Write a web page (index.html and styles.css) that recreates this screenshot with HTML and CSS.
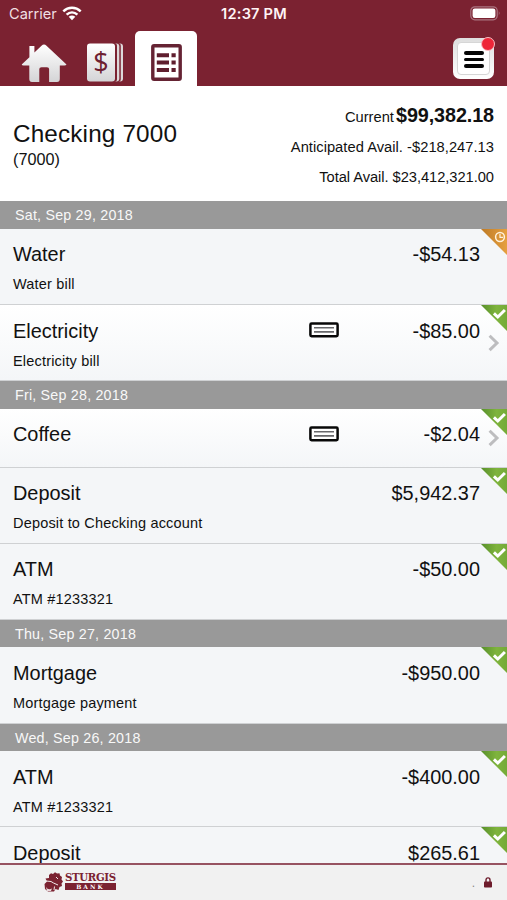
FILE: index.html
```html
<!DOCTYPE html>
<html lang="en">
<head>
<meta charset="utf-8">
<title>Checking 7000</title>
<link rel="stylesheet" href="styles.css">
</head>
<body>
<svg width="0" height="0" class="defs" aria-hidden="true">
  <defs>
    <linearGradient id="silver" x1="0" y1="0" x2="0" y2="1"><stop offset="0" stop-color="#fff"/><stop offset="1" stop-color="#d4d4d6"/></linearGradient>
    <linearGradient id="green" x1="0" y1="0" x2="1" y2="0"><stop offset="0" stop-color="#578f2b"/><stop offset=".6" stop-color="#7fb43d"/><stop offset="1" stop-color="#74aa38"/></linearGradient>
    <linearGradient id="orange" x1="0" y1="0" x2="1" y2="0"><stop offset="0" stop-color="#bd7a25"/><stop offset="1" stop-color="#e6a040"/></linearGradient>
    <symbol id="done" viewBox="0 0 26 26"><path d="M0 0H26V26Z" fill="url(#green)"/><path d="M12.9 8.3L16.8 12L23.9 5" fill="none" stroke="#fff" stroke-width="3"/></symbol>
    <symbol id="pending" viewBox="0 0 26 26"><path d="M0 0H26V26Z" fill="url(#orange)"/><circle cx="19" cy="8" r="4.4" fill="none" stroke="#fff2dc" stroke-width="1.5"/><path d="M19 5V8.3H22" fill="none" stroke="#fff2dc" stroke-width="1.2"/></symbol>
    <symbol id="check" viewBox="0 0 30 16"><rect x="1.4" y="1.6" width="27.2" height="12.6" rx="1.2" fill="#fff" stroke="#080808" stroke-width="2.5"/><path d="M5 5.8H25M5 9.9H25" stroke="#68686b" stroke-width="1.6"/></symbol>
    <symbol id="chevron" viewBox="0 0 12 18"><path d="M1.6 1.7L9 9L1.6 16.2" fill="none" stroke="#bdbdbf" stroke-width="3"/></symbol>
  </defs>
</svg>
<div class="app">
  <header class="top">
    <div class="status">
      <div class="carrier">Carrier
        <svg width="20" height="15" viewBox="0 0 20 15"><g fill="none" stroke="#fff" stroke-width="2.5"><path d="M1.3 5.3C6.2.7 13.8.7 18.7 5.3"/><path d="M4.6 8.6C7.8 5.7 12.2 5.7 15.4 8.6"/></g><path d="M6.7 10.8Q10 8.1 13.3 10.8L10 14.2Z" fill="#fff"/></svg>
      </div>
      <div class="clock">12:37 PM</div>
      <svg class="battery" width="31" height="15" viewBox="0 0 31 15"><rect x=".8" y=".8" width="26.4" height="13" rx="4" fill="none" stroke="#aa7480" stroke-width="1.2"/><rect x="2.6" y="2.6" width="22.8" height="9.4" rx="2.2" fill="#fff"/><path d="M28.8 5Q30.6 7.2 28.8 9.4Z" fill="#aa7480"/></svg>
    </div>
    <nav class="tabs">
      <svg class="home" width="46" height="40" viewBox="0 0 46 40"><path d="M.7 21.5L8.4 14.3V3H13.4V9.5L20.5 2.7Q23 .3 25.5 2.7L45.5 21.5Q45 22.6 43.4 22.6H38.8V36Q38.8 39 36 39H28.1V26Q28.1 24.2 26 24.2H20.5Q18.3 24.2 18.3 26V39H11Q8.3 39 8.3 36V22.6H2.5Q.9 22.6.7 21.5Z" fill="url(#silver)"/></svg>
      <svg class="money" width="37" height="39" viewBox="0 0 37 39"><rect x="7" y=".5" width="29" height="38" rx="3" fill="#ddd8d9"/><rect x="5" y="0" width="28.8" height="39" rx="3" fill="#7b2231"/><rect x="4" y=".5" width="28.3" height="38" rx="3" fill="#ddd8d9"/><rect x="2" y="0" width="28" height="39" rx="3" fill="#7b2231"/><rect x="0" y=".5" width="28" height="38" rx="3" fill="url(#silver)"/><text x="14" y="28.5" text-anchor="middle" class="dollar">$</text></svg>
      <div class="tab">
        <svg width="31" height="37" viewBox="0 0 31 37"><rect x="1.8" y="1.8" width="27.4" height="33.4" rx="1.3" fill="#fff" stroke="#652333" stroke-width="3.4"/><path d="M5.8 11.3H18M5.8 18.6H18M5.8 26H18M20.5 11.3H24.7M20.5 18.6H24.7M20.5 26H24.7" stroke="#5f1e2e" stroke-width="4"/></svg>
      </div>
      <div class="menu">
        <div class="menu-face"><i></i><i></i><i></i></div><b class="dot"></b>
      </div>
    </nav>
  </header>
  <section class="account">
    <div><h1>Checking 7000</h1><p class="number">(7000)</p></div>
    <div class="balances">
      <p class="current"><span>Current</span> <strong>$99,382.18</strong></p>
      <p class="anticipated">Anticipated Avail. -$218,247.13</p>
      <p class="total">Total Avail. $23,412,321.00</p>
    </div>
  </section>
  <main class="list">
    <h2>Sat, Sep 29, 2018</h2>
    <article class="row"><div class="line"><span>Water</span><span>-$54.13</span></div><p>Water bill</p><svg class="flag"><use href="#pending"/></svg></article>
    <article class="row link"><div class="line"><span>Electricity</span><svg class="slip"><use href="#check"/></svg><span>-$85.00</span></div><p>Electricity bill</p><svg class="flag"><use href="#done"/></svg><svg class="chevron"><use href="#chevron"/></svg></article>
    <h2>Fri, Sep 28, 2018</h2>
    <article class="row link short"><div class="line"><span>Coffee</span><svg class="slip"><use href="#check"/></svg><span>-$2.04</span></div><svg class="flag"><use href="#done"/></svg><svg class="chevron"><use href="#chevron"/></svg></article>
    <article class="row"><div class="line"><span>Deposit</span><span>$5,942.37</span></div><p>Deposit to Checking account</p><svg class="flag"><use href="#done"/></svg></article>
    <article class="row"><div class="line"><span>ATM</span><span>-$50.00</span></div><p>ATM #1233321</p><svg class="flag"><use href="#done"/></svg></article>
    <h2>Thu, Sep 27, 2018</h2>
    <article class="row"><div class="line"><span>Mortgage</span><span>-$950.00</span></div><p>Mortgage payment</p><svg class="flag"><use href="#done"/></svg></article>
    <h2>Wed, Sep 26, 2018</h2>
    <article class="row"><div class="line"><span>ATM</span><span>-$400.00</span></div><p>ATM #1233321</p><svg class="flag"><use href="#done"/></svg></article>
    <article class="row"><div class="line"><span>Deposit</span><span>$265.61</span></div><svg class="flag"><use href="#done"/></svg></article>
  </main>
  <footer>
    <div class="brand">
      <svg width="20" height="20" viewBox="0 0 20 20"><path d="M5 3L7 1.2L9 2L11 .3L13 1.5L15.5 1.2L16 3.5L18 5L17.5 7.5L19 9.5L17.5 11.5L18 14L15.5 15L14.5 18L11.5 17L10 19.5H4L1 17L.5 12L3 9.5L1.5 6.5L5 6Z" fill="#7b2231"/><path d="M2 9L7 9.5L9.5 11L14 13M12 5L14 7M10.5 14.5L10 18" fill="none" stroke="#f1e9ea" stroke-width="1"/><path d="M2 15Q4 18.5 8 16.5L7 19H3Z" fill="#ead9dc"/></svg>
      <div class="wordmark"><span class="name">STURGIS</span><span class="bank">BANK</span></div>
    </div>
    <div class="secure"><span>.</span><svg width="8" height="11" viewBox="0 0 8 11"><path d="M2 5V3Q2 .9 4 .9T6 3V5" fill="none" stroke="#6d1b2b" stroke-width="1.4"/><rect y="4.5" width="8" height="6" rx=".8" fill="#6d1b2b"/></svg></div>
  </footer>
</div>
</body>
</html>
```
FILE: styles.css
```css
* { box-sizing: border-box; }
body { margin: 0; background: #fff; color: #111; font-family: "Liberation Sans", Arial, sans-serif; }
h1, h2, p { margin: 0; font-weight: 400; }
svg { display: block; flex: none; }
.defs { position: absolute; }
.app { width: 507px; height: 900px; display: flex; flex-direction: column; overflow: hidden; }
.top { height: 86px; flex: none; background: #7b2231; display: flex; flex-direction: column; }
.status { height: 31px; padding: 0 6px 4px 9px; display: grid; grid-template-columns: 1fr auto 1fr; align-items: center; color: #fff; font: 14.6px/18px Inter, sans-serif; }
.carrier { display: flex; gap: 5px; align-items: center; color: #f1dfe2; }
.clock { font-weight: 600; font-size: 14.6px; letter-spacing: .2px; color: #fff4f5; margin-left: -2px; }
.battery { justify-self: end; }
.tabs { flex: 1; display: flex; align-items: flex-start; padding: 0 13px 0 21px; }
.home { margin-top: 12px; }
.money { margin: 12px 0 0 20px; }
.dollar { font: 27px "Open Sans", sans-serif; fill: #6d2030; }
.tab { width: 62px; height: 55px; margin-left: 11px; padding: 13px 0 0 16px; background: #fff; border-radius: 5px 5px 0 0; }
.menu { position: relative; width: 41px; height: 41px; margin: 7px 0 0 auto; padding: 4px; border-radius: 7px; background: linear-gradient(#dedede, #fff); }
.menu-face { height: 33px; background: #fff; border: 1px solid #d6d6d6; border-radius: 4px; display: flex; flex-direction: column; justify-content: center; align-items: center; gap: 3px; padding-top: 2px; }
.menu-face i { width: 20px; height: 3.5px; border-radius: 2px; background: #050505; }
.dot { position: absolute; top: -1px; right: -1px; width: 14px; height: 14px; border-radius: 50%; border: 1px solid #f8bcc2; background: #ee2638; }
.account { height: 115.4px; flex: none; display: flex; justify-content: space-between; padding: 0 13px; background: #fff; }
h1 { margin-top: 33px; font-size: 24.3px; line-height: 30px; letter-spacing: .15px; }
.number { font-size: 16.2px; line-height: 20px; }
.balances { padding-top: 16px; text-align: right; font-size: 14.7px; }
.current { line-height: 27px; }
.current span { margin-right: -2px; }
.current strong { font-size: 19.8px; letter-spacing: -.1px; }
.anticipated { margin-top: 2px; line-height: 29px; letter-spacing: .03px; }
.total { line-height: 30px; letter-spacing: -.05px; }
.list { flex: 1; min-height: 0; overflow: hidden; }
h2 { height: 27.3px; background: #999; color: #f8f8f8; font-size: 14.3px; line-height: 29px; padding-left: 15px; letter-spacing: .2px; }
.row { position: relative; height: 76.3px; padding: 10.6px 27px 0 13px; background: #f4f6f8; border-bottom: 1px solid #cfd1d3; }
.row.link { background: linear-gradient(#fff, #f4f6f8); }
.row.short { height: 59px; }
.line { display: flex; align-items: center; height: 30px; font-size: 19.9px; line-height: 30px; }
.line span:last-child { margin-left: auto; }
.row p { margin-top: 5px; font-size: 14.5px; line-height: 20px; letter-spacing: .18px; }
.flag { position: absolute; top: 0; right: 0; width: 26px; height: 26px; }
.chevron { position: absolute; right: 7px; top: 29px; width: 12px; height: 18px; }
.short .chevron { top: 20px; }
.slip { position: absolute; left: 308.5px; top: 17px; width: 30px; height: 16px; }
footer { height: 37px; flex: none; border-top: 2px solid #975361; background: #f1f1f1; display: flex; justify-content: space-between; padding: 7px 15px 0 44px; }
.brand { display: flex; gap: 1px; }
.wordmark { width: 51px; color: #7b2231; }
.name { display: block; font: 700 10.2px/11px "DejaVu Serif", serif; letter-spacing: -.35px; white-space: nowrap; }
.bank { display: block; height: 7px; background: #7b2231; color: #fff; font: 700 6px/7px "DejaVu Serif", serif; text-align: center; letter-spacing: 2px; }
.secure { display: flex; align-items: flex-start; gap: 9px; padding-top: 5px; color: #888; font: 12px/12px "Liberation Sans", sans-serif; }
```
